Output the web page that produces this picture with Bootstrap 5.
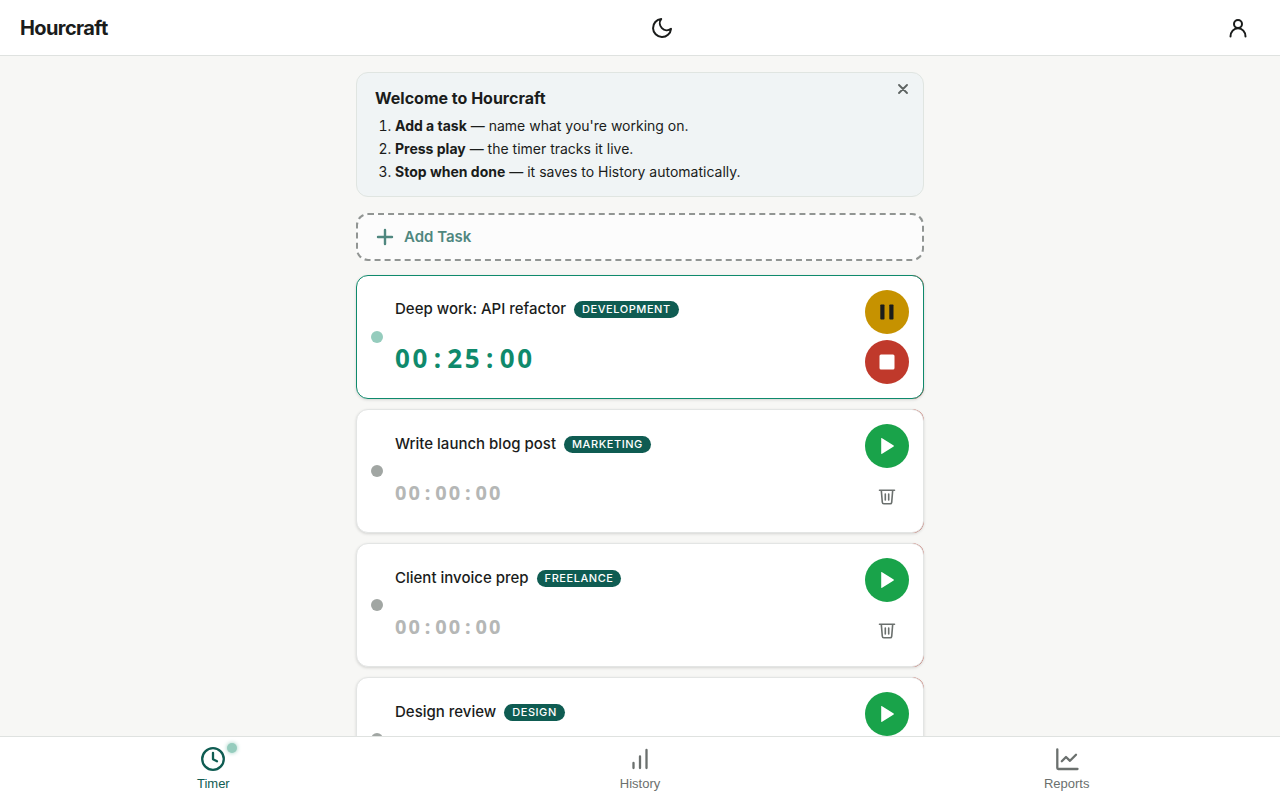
<!DOCTYPE html>
<html lang="en">
<head>
<meta charset="utf-8">
<meta name="viewport" content="width=device-width, initial-scale=1">
<title>Hourcraft</title>
<link rel="stylesheet" href="https://cdn.jsdelivr.net/npm/bootstrap@5.3.0/dist/css/bootstrap.min.css">
<style>
  :root { --ink: #1a1c1b; --muted: #6b706e; --line: #dfe2e0; --brand: #0f5c52; --live: #0f8a6c; }
  body { font-family: Inter, sans-serif; background: #f7f7f5; color: var(--ink); padding: 72px 0 80px; }
  svg { display: block; fill: none; stroke: currentColor; stroke-width: 2; stroke-linecap: round; stroke-linejoin: round; }
  .topbar { height: 56px; padding: 0 20px; background: #fff; border-bottom: 1px solid var(--line); }
  .brand-name { font-size: 20px; font-weight: 700; letter-spacing: -0.03em; color: var(--ink); }
  .icon-btn { width: 44px; height: 44px; padding: 0; border: 0; background: none; color: var(--ink); display: flex; align-items: center; justify-content: center; }
  .page { max-width: 600px; padding: 0 16px; }
  .welcome { background: #f0f4f5; border: 1px solid #e0e5e1; border-radius: 12px; padding: 13px 18px; margin-bottom: 16px; }
  .welcome h1 { font-size: 16px; font-weight: 700; line-height: 24px; margin: 0 0 4px; }
  .welcome ol { font-size: 14px; line-height: 23px; padding-left: 20px; margin: 0; }
  .welcome strong { font-weight: 700; }
  .dismiss { top: 0; right: 4px; width: 32px; height: 32px; color: #5d6361; }
  .dismiss svg { stroke-width: 1.8; }
  .add-task { height: 48px; padding: 0 18px; gap: 10px; border: 2px dashed #919593; border-radius: 12px; background: #fcfcfc; color: #4f877f; font-size: 15px; font-weight: 600; margin-bottom: 14px; }
  .add-task svg { stroke-width: 2.4; }
  .task-list, .task-actions { display: flex; flex-direction: column; gap: 10px; }
  .task-actions { gap: 6px; }
  .swipe { border-radius: 12px; background: linear-gradient(#c0392b, #c0392b) right / 80px 100% no-repeat; }
  .task { background: #fff; border: 1px solid #e3e5e4; border-radius: 12px; padding: 14px; gap: 12px; box-shadow: 0 1px 3px rgba(0, 0, 0, .14); }
  .task.live { border-color: var(--live); }
  .state-dot { width: 12px; height: 12px; border-radius: 50%; background: #a1a6a3; }
  .live .state-dot { background: #95ccbd; }
  .task-title { font-size: 15px; font-weight: 500; line-height: 28px; margin: 0; }
  .tag { height: 17px; line-height: 17px; padding: 0 8px; border-radius: 9px; background: var(--brand); color: #fff; font-size: 11px; font-weight: 500; letter-spacing: 0.05em; }
  .clock { font-family: "Noto Sans", sans-serif; font-weight: 700; font-size: 20px; line-height: 38px; letter-spacing: 0.1em; color: #b5b7b6; margin-top: 16px; }
  .clock i { display: inline-block; width: 0.67em; font-style: normal; text-align: center; }
  .live .clock { font-size: 26px; line-height: 42px; color: var(--live); margin-top: 14px; }
  .round { width: 44px; height: 44px; border: 0; padding: 0; border-radius: 50%; display: flex; align-items: center; justify-content: center; color: #fff; }
  .round svg { fill: currentColor; stroke: none; }
  .play { background: #19a34a; }
  .pause { background: #c69200; color: var(--ink); }
  .stop { background: #c0392b; }
  .trash { color: var(--muted); }
  .trash svg { stroke-width: 1.6; }
  .tabs { height: 64px; background: #fff; border-top: 1px solid var(--line); }
  .tab-link { color: var(--muted); font-family: "Liberation Sans", sans-serif; font-size: 13px; line-height: 18px; gap: 4px; padding-top: 10px; }
  .tab-link svg { stroke-width: 2.3; }
  .tab-link.on { color: var(--brand); }
  .tab-dot { top: -4px; right: -12px; width: 10px; height: 10px; border-radius: 50%; background: #95ccbd; box-shadow: 0 0 4px #95ccbd; }
</style>
</head>
<body>
<svg class="d-none" aria-hidden="true">
  <symbol id="i-play" viewBox="0 0 24 24"><path d="M6.200 4.400v15.200c0 .3.3.4.5.3l12-7.500c.3-.2.3-.6 0-.8l-12-7.500c-.2-.1-.5 0-.5.3z"/></symbol>
  <symbol id="i-trash" viewBox="0 0 18 20"><path d="M1.500 4.300h15M3.300 4.300l1 12c.1 1 .6 1.500 1.500 1.500h6.400c.9 0 1.400-.5 1.500-1.500l1-12M7.300 8v6M10.700 8v6"/></symbol>
</svg>

<header class="topbar fixed-top d-flex align-items-center justify-content-between">
  <a class="brand-name text-decoration-none" href="#">Hourcraft</a>
  <button class="icon-btn" type="button" aria-label="Dark mode"><svg width="24" height="24" viewBox="0 0 24 24"><path d="M21 12.790A9 9 0 1 1 11.210 3 7 7 0 0 0 21 12.790z"/></svg></button>
  <button class="icon-btn" type="button" aria-label="Account"><svg width="24" height="24" viewBox="0 0 24 24"><circle cx="12" cy="8" r="4"/><path d="M4.500 20.500c0-4.700 3.300-8.200 7.500-8.200s7.500 3.500 7.500 8.200"/></svg></button>
</header>

<main class="page mx-auto">
  <section class="welcome position-relative">
    <h1>Welcome to Hourcraft</h1>
    <ol>
      <li><strong>Add a task</strong> — name what you're working on.</li>
      <li><strong>Press play</strong> — the timer tracks it live.</li>
      <li><strong>Stop when done</strong> — it saves to History automatically.</li>
    </ol>
    <button class="icon-btn dismiss position-absolute" type="button" aria-label="Dismiss"><svg width="10" height="10" viewBox="0 0 10 10"><path d="M1 1l8 8M9 1L1 9"/></svg></button>
  </section>

  <button class="add-task w-100 d-flex align-items-center" type="button">
    <svg width="18" height="18" viewBox="0 0 18 18"><path d="M9 2v14M2 9h14"/></svg>Add Task
  </button>

  <div class="task-list">
    <div class="swipe"><article class="task live d-flex align-items-center">
      <span class="state-dot flex-shrink-0"></span>
      <div class="flex-grow-1">
        <div class="d-flex align-items-center gap-2"><h2 class="task-title">Deep work: API refactor</h2><span class="tag">DEVELOPMENT</span></div>
        <div class="clock">00<i>:</i>25<i>:</i>00</div>
      </div>
      <div class="task-actions">
        <button class="round pause" type="button" aria-label="Pause"><svg width="24" height="24" viewBox="0 0 24 24"><rect x="5.300" y="4.500" width="4.200" height="15" rx=".8"/><rect x="14.300" y="4.500" width="4.200" height="15" rx=".8"/></svg></button>
        <button class="round stop" type="button" aria-label="Stop"><svg width="24" height="24" viewBox="0 0 24 24"><rect x="4.500" y="4.500" width="15" height="15" rx="1.500"/></svg></button>
      </div>
    </article></div>

    <div class="swipe"><article class="task d-flex align-items-center">
      <span class="state-dot flex-shrink-0"></span>
      <div class="flex-grow-1">
        <div class="d-flex align-items-center gap-2"><h2 class="task-title">Write launch blog post</h2><span class="tag">MARKETING</span></div>
        <div class="clock">00<i>:</i>00<i>:</i>00</div>
      </div>
      <div class="task-actions">
        <button class="round play" type="button" aria-label="Start"><svg width="24" height="24"><use href="#i-play"/></svg></button>
        <button class="icon-btn trash" type="button" aria-label="Delete"><svg width="18" height="20"><use href="#i-trash"/></svg></button>
      </div>
    </article></div>

    <div class="swipe"><article class="task d-flex align-items-center">
      <span class="state-dot flex-shrink-0"></span>
      <div class="flex-grow-1">
        <div class="d-flex align-items-center gap-2"><h2 class="task-title">Client invoice prep</h2><span class="tag">FREELANCE</span></div>
        <div class="clock">00<i>:</i>00<i>:</i>00</div>
      </div>
      <div class="task-actions">
        <button class="round play" type="button" aria-label="Start"><svg width="24" height="24"><use href="#i-play"/></svg></button>
        <button class="icon-btn trash" type="button" aria-label="Delete"><svg width="18" height="20"><use href="#i-trash"/></svg></button>
      </div>
    </article></div>

    <div class="swipe"><article class="task d-flex align-items-center">
      <span class="state-dot flex-shrink-0"></span>
      <div class="flex-grow-1">
        <div class="d-flex align-items-center gap-2"><h2 class="task-title">Design review</h2><span class="tag">DESIGN</span></div>
        <div class="clock">00<i>:</i>00<i>:</i>00</div>
      </div>
      <div class="task-actions">
        <button class="round play" type="button" aria-label="Start"><svg width="24" height="24"><use href="#i-play"/></svg></button>
        <button class="icon-btn trash" type="button" aria-label="Delete"><svg width="18" height="20"><use href="#i-trash"/></svg></button>
      </div>
    </article></div>
  </div>
</main>

<nav class="tabs fixed-bottom d-flex">
  <a class="tab-link on w-100 d-flex flex-column align-items-center text-decoration-none" href="#" aria-current="page">
    <span class="position-relative"><svg width="24" height="24" viewBox="0 0 24 24"><circle cx="12" cy="12" r="10.800"/><path d="M12 5.800v6.500l4 2"/></svg><span class="tab-dot position-absolute"></span></span>Timer
  </a>
  <a class="tab-link w-100 d-flex flex-column align-items-center text-decoration-none" href="#">
    <svg width="24" height="24" viewBox="0 0 24 24"><path d="M5.500 16v5M12 9.500v11.500M18.500 3v18"/></svg>History
  </a>
  <a class="tab-link w-100 d-flex flex-column align-items-center text-decoration-none" href="#">
    <svg width="24" height="24" viewBox="0 0 24 24"><path d="M2.300 2.300v18.700q0 1 1 1H22.500M6.800 14.300l4.200-4.300 4 3.800 6-6"/></svg>Reports
  </a>
</nav>
<script src="https://cdn.jsdelivr.net/npm/bootstrap@5.3.0/dist/js/bootstrap.bundle.min.js"></script>
</body>
</html>
